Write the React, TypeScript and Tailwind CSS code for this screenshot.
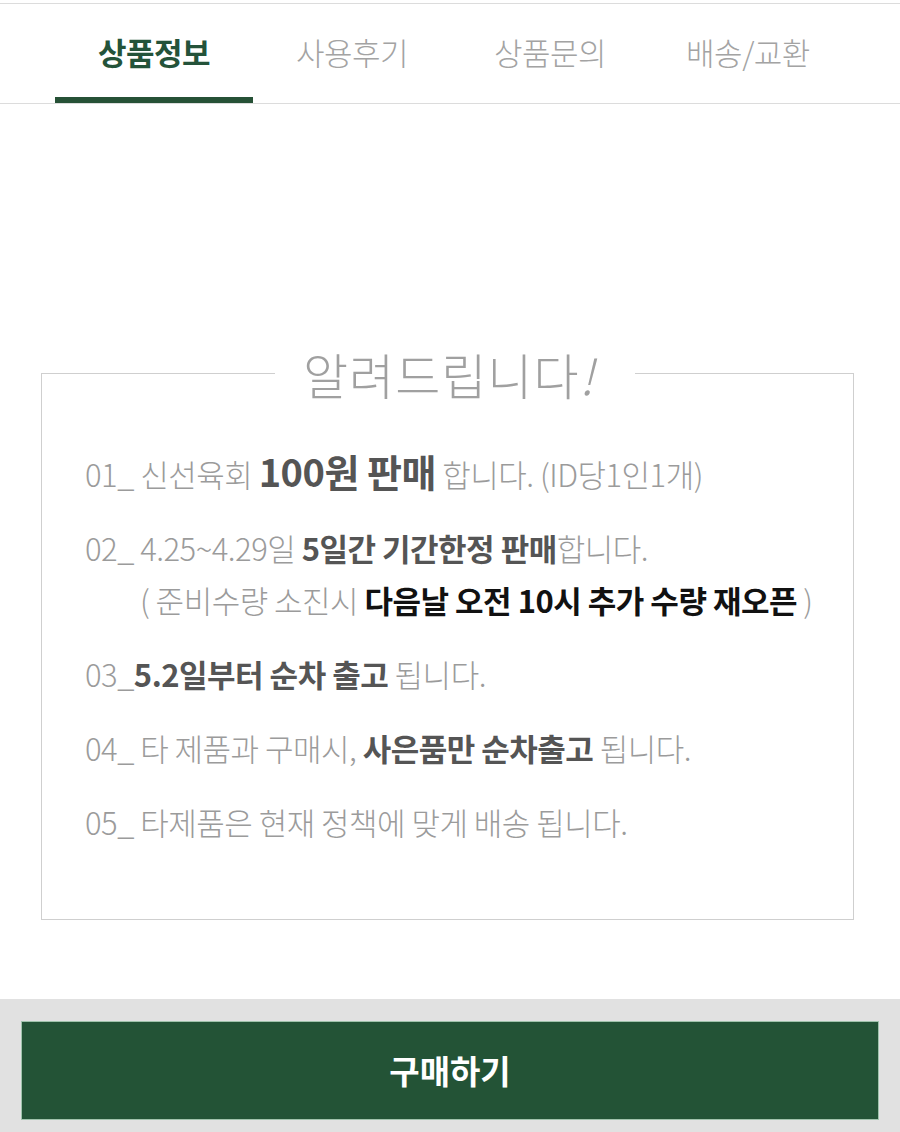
import React from "react";

const font = { fontFamily: '"Noto Sans CJK KR", "Noto Sans", sans-serif' };

function Tabs() {
  const tabs = ["상품정보", "사용후기", "상품문의", "배송/교환"];
  return (
    <div className="pt-[3px]">
      <div className="border-t border-[#dcdcdc]">
        <div className="flex pl-[55px] pr-[53px] border-b border-[#dcdcdc]">
          {tabs.map((t, i) => (
            <div key={t} className="flex-1 flex flex-col items-center">
              <div
                className={
                  "h-[93px] pt-[26px] leading-[44px] text-[31px] tracking-[-0.5px] " +
                  (i === 0 ? "font-bold text-[#24533a]" : "font-light text-[#a3a3a3]")
                }
              >
                {t}
              </div>
              <div className={"h-[6px] w-full " + (i === 0 ? "bg-[#265136]" : "bg-transparent")} />
            </div>
          ))}
        </div>
      </div>
    </div>
  );
}

function Notice() {
  return (
    <div className="ml-[41px] mr-[46px] mt-[269px] relative border border-[#cfcfcf]">
      <div className="absolute left-0 right-0 -top-[30px] flex justify-center">
        <div className="ml-[15px] bg-white pl-[28px] pr-[40px] text-[49px] leading-[60px] font-light text-[#a0a0a0] tracking-[1px]">
          알려드립니다<span className="italic">!</span>
        </div>
      </div>
      <div className="pt-[71px] pb-[71px] pl-[43px] flex flex-col gap-[22px] text-[31px] leading-[52px] font-light text-[#9b9b9b] tracking-[-0.5px]">
        <div>
          01_ 신선육회{" "}
          <span className="text-[38px] font-bold text-[#555555] tracking-[-0.5px]">100원 판매</span> 합니다. (ID당1인1개)
        </div>
        <div>
          <div>
            02_ 4.25~4.29일 <span className="font-bold text-[#555555]">5일간 기간한정 판매</span>합니다.
          </div>
          <div className="pl-[55px]">
            ( 준비수량 소진시{" "}
            <span className="font-bold text-[#111111]">다음날 오전 10시 추가 수량 재오픈</span> )
          </div>
        </div>
        <div>
          03_<span className="font-bold text-[#555555]">5.2일부터 순차 출고</span> 됩니다.
        </div>
        <div>
          04_ 타 제품과 구매시, <span className="font-bold text-[#555555]">사은품만 순차출고</span> 됩니다.
        </div>
        <div>05_ 타제품은 현재 정책에 맞게 배송 됩니다.</div>
      </div>
    </div>
  );
}

export default function App() {
  return (
    <div className="w-[900px] h-[1132px] bg-white flex flex-col overflow-hidden" style={font}>
      <Tabs />
      <Notice />
      <div className="flex-1" />
      <div className="h-[133px] bg-[#e1e1e1] pt-[22px] px-[21px] pb-[12px]">
        <div className="h-[99px] bg-[#235336] border border-[#9fc2ab] flex items-center justify-center text-white text-[33px] font-bold">
          구매하기
        </div>
      </div>
    </div>
  );
}
